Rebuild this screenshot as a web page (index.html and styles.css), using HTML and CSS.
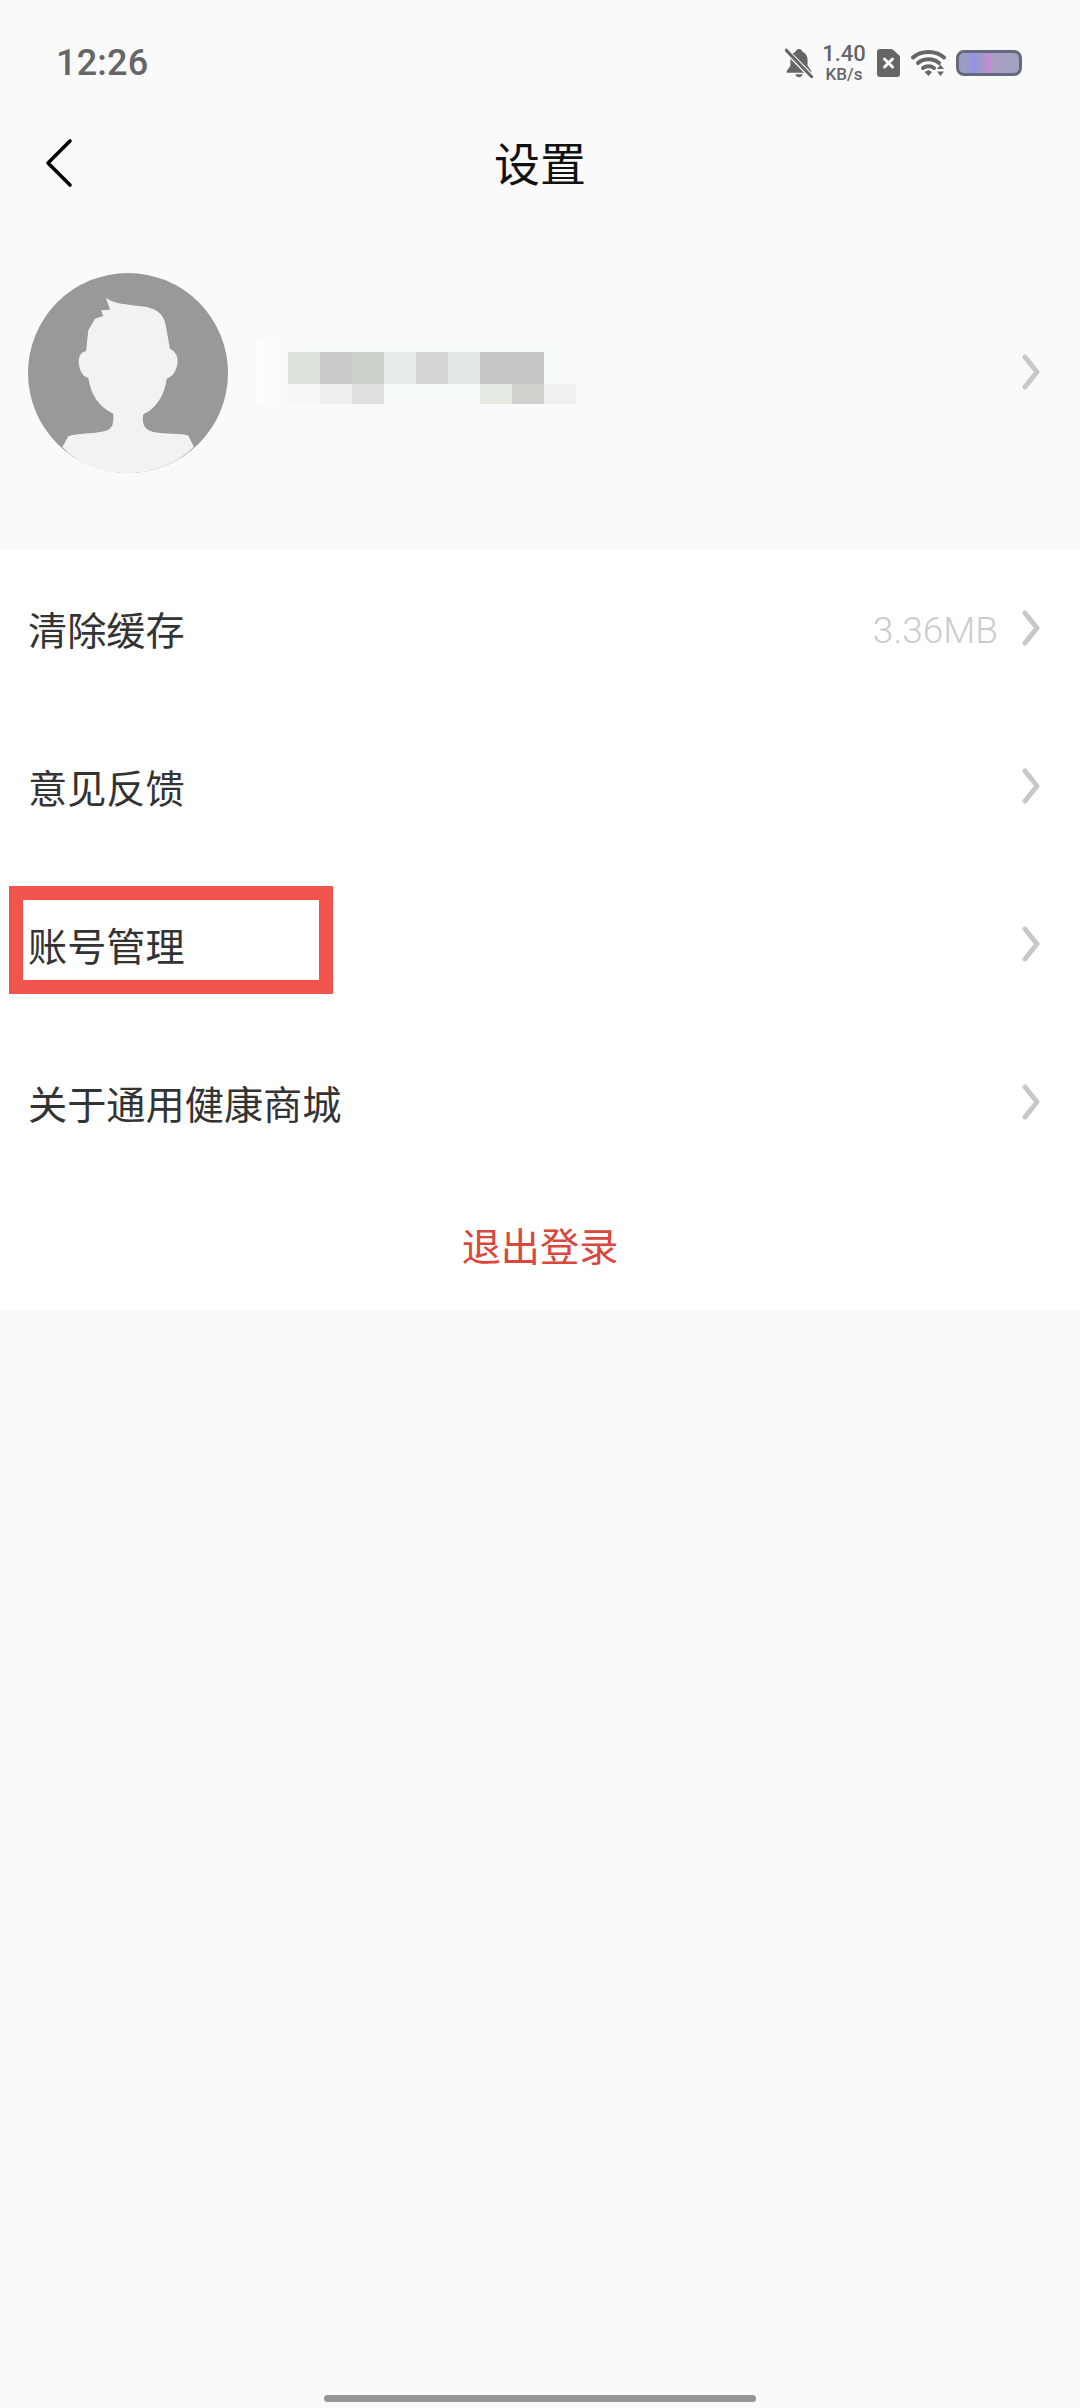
FILE: index.html
```html
<!DOCTYPE html>
<html lang="zh-CN">
<head>
<meta charset="utf-8">
<title>设置</title>
<link rel="stylesheet" href="styles.css">
</head>
<body>
<div class="page">
  <header class="status">
    <span class="time">12:26</span>
    <div class="status-icons">
      <svg class="i-bell" viewBox="0 0 26 28"><path d="M13 1C11.400 1 10.200 2 9.800 3.400 6.600 4.600 5 7.500 5 11v5.500L1.500 21.500V23h23v-1.500L21 16.500V11c0-3.500-1.600-6.400-4.800-7.600C15.800 2 14.600 1 13 1zM9.500 24.500h7c-.5 1.700-1.900 2.800-3.500 2.800s-3-1.100-3.500-2.800z" fill="#666"/><path d="M0 1.500l25 25.500" stroke="#fafafa" stroke-width="5"/><path d="M1 2l24 25" stroke="#666" stroke-width="2.800" stroke-linecap="round"/></svg>
      <div class="speed"><span class="speed-num">1.40</span><span class="speed-unit">KB/s</span></div>
      <svg class="i-sim" viewBox="0 0 23 28"><path d="M3 0h12l8 7v18a3 3 0 0 1-3 3H3a3 3 0 0 1-3-3V3a3 3 0 0 1 3-3z" fill="#666"/><path d="M7.500 10l8 8M15.500 10l-8 8" stroke="#fff" stroke-width="3" stroke-linecap="round"/></svg>
      <svg class="i-wifi" viewBox="0 0 35 27"><g fill="none" stroke="#666" stroke-width="4" stroke-linecap="round"><path d="M2 8.500C10 1 25 1 33 8.500"/><path d="M7 14c6-5 15-5 21 0"/><path d="M12 19c3-2.200 8-2.200 11 0"/></g><path d="M13.500 23l4-2 3.500 2-3.500 4z" fill="#666"/><path d="M29.500 15.500l3.500 4.500h-7zM29.500 27l3.500-4.500h-7z" fill="#666"/></svg>
      <div class="battery"></div>
    </div>
  </header>

  <nav class="nav">
    <svg class="back" viewBox="0 0 30 50"><path d="M26 3L4 25l22 22" fill="none" stroke="#000" stroke-width="3.600" stroke-linecap="round" stroke-linejoin="round"/></svg>
    <h1 class="title">设置</h1>
  </nav>

  <section class="profile">
    <svg class="avatar" viewBox="84 68 600 600">
      <circle cx="384" cy="368" r="300" fill="#999"/>
      <path fill="#f2f2f2" d="M318 143C350 165 400 163 440 170C475 178 492 195 497 225L510 295C525 303 534 315 533 335C530 362 518 380 500 385C495 430 470 475 430 492C426 515 428 538 460 545C500 552 545 548 565 556L582 590C530 640 460 668 384 668C300 668 235 640 187 590L205 558C240 547 290 552 322 540C342 530 340 510 340 490C295 470 272 430 265 383C245 378 236 355 236 330C238 312 248 303 258 303L265 240L285 205L310 197L303 180L330 178Z"/>
    </svg>
    <div class="name" aria-hidden="true">
      <div class="mask-glow"></div>
      <div class="mask-row tall">
        <i class="c1"></i><i class="c2"></i><i class="c3"></i><i class="c4"></i><i class="c5"></i><i class="c6"></i><i class="c7"></i><i class="c7"></i>
      </div>
      <div class="mask-row short">
        <i class="c8"></i><i class="c9"></i><i class="c10"></i><i class="c0"></i><i class="c0"></i><i class="c0"></i><i class="c11"></i><i class="c12"></i><i class="c13"></i>
      </div>
    </div>
    <svg class="chev chev-profile" viewBox="0 0 18 36"><path d="M3 3l12 15L3 33"/></svg>
  </section>

  <section class="list">
    <div class="row"><span class="label">清除缓存</span><div class="right"><span class="value">3.36MB</span><svg class="chev" viewBox="0 0 18 36"><path d="M3 3l12 15L3 33"/></svg></div></div>
    <div class="row"><span class="label">意见反馈</span><div class="right"><svg class="chev" viewBox="0 0 18 36"><path d="M3 3l12 15L3 33"/></svg></div></div>
    <div class="row"><span class="label">账号管理</span><div class="right"><svg class="chev" viewBox="0 0 18 36"><path d="M3 3l12 15L3 33"/></svg></div><div class="highlight"></div></div>
    <div class="row"><span class="label">关于通用健康商城</span><div class="right"><svg class="chev" viewBox="0 0 18 36"><path d="M3 3l12 15L3 33"/></svg></div></div>
    <div class="logout">退出登录</div>
  </section>

  <div class="home-bar"><span class="home-pill"></span></div>
</div>
</body>
</html>
```

FILE: styles.css
```css
* { box-sizing: border-box; }
html, body { margin: 0; padding: 0; }
body {
  background: #fafafa;
  font-family: "Noto Sans CJK SC", "Noto Sans", sans-serif;
}
.page {
  width: 1080px;
  height: 2408px;
  display: flex;
  flex-direction: column;
  background: #fafafa;
}
.status {
  height: 124px;
  flex: none;
  display: flex;
  justify-content: space-between;
  align-items: flex-start;
  padding: 42px 58px 0 56px;
}
.time {
  font-family: Roboto, sans-serif;
  font-size: 36px;
  font-weight: 500;
  letter-spacing: 0.2px;
  line-height: 42px;
  color: #666;
}
.status-icons {
  display: flex;
  align-items: center;
  margin-top: 0;
}
.i-bell { width: 28px; height: 30px; margin-right: 9px; }
.speed {
  width: 44px;
  display: flex;
  flex-direction: column;
  align-items: center;
  font-family: Roboto, sans-serif;
  font-weight: 500;
  color: #666;
  margin-right: 11px;
}
.speed-num { font-size: 22px; line-height: 23px; }
.speed-unit { font-size: 17px; line-height: 18px; }
.i-sim { width: 23px; height: 28px; margin-right: 11px; }
.i-wifi { width: 35px; height: 27px; margin-right: 10px; }
.battery {
  width: 66px;
  height: 26px;
  border: 3px solid #666a80;
  border-radius: 8px;
  background: linear-gradient(90deg, #9a9cc4 0%, #9a9cc4 12%, #9690e6 25%, #a09cc8 38%, #c48bd4 48%, #a9a0c4 60%, #a2a2bc 100%);
}

.nav {
  height: 76px;
  flex: none;
  position: relative;
  display: flex;
  align-items: center;
  justify-content: center;
}
.back {
  position: absolute;
  left: 44px;
  top: 14px;
  width: 30px;
  height: 50px;
}
.title {
  margin: 0 0 2px;
  font-size: 46px;
  font-weight: 400;
  line-height: 60px;
  color: #111;
}

.profile {
  height: 350px;
  flex: none;
  display: flex;
  align-items: center;
  padding: 0 40px 4px 28px;
}
.avatar { width: 200px; height: 200px; flex: none; }
.name {
  position: relative;
  flex: 1;
  margin-left: 60px;
  height: 52px;
  margin-top: 10px;
}
.mask-glow {
  position: absolute;
  left: -32px;
  right: 270px;
  top: -12px;
  height: 64px;
  background: linear-gradient(90deg, #fcfdfc, #f7fbf8 8%, #f7fbf8 60%, #fafafa);
}
.mask-row { position: relative; display: flex; }
.mask-row i { display: block; width: 32px; height: 100%; }
.mask-row.tall { height: 32px; }
.mask-row.short { height: 20px; }
.c0 { background: transparent; }
.c1 { background: #dde1dc; }
.c2 { background: #ccc9cb; }
.c3 { background: #ccd0cb; }
.c4 { background: #e6ecea; }
.c5 { background: #d5d5d5; }
.c6 { background: #e4e8e4; }
.c7 { background: #c6c6c6; }
.c8 { background: #f6f7f6; }
.c9 { background: #eeeeee; }
.c10 { background: #dfe1de; }
.c11 { background: #e6ece4; }
.c12 { background: #cfd1cc; }
.c13 { background: #f0f1ee; }

.chev { width: 18px; height: 36px; flex: none; }
.chev-profile { margin-top: -2px; }
.chev path {
  fill: none;
  stroke: #c8c8c8;
  stroke-width: 5;
  stroke-linecap: round;
  stroke-linejoin: round;
}

.list {
  flex: none;
  background: #fff;
  padding-top: 2px;
}
.row {
  position: relative;
  height: 158px;
  display: flex;
  align-items: center;
  justify-content: space-between;
  padding: 0 40px 0 28px;
}
.label {
  font-size: 39.200px;
  line-height: 56px;
  color: #333;
  margin-top: -6px;
}
.right { display: flex; align-items: center; margin-top: -7px; }
.value {
  font-family: Roboto, sans-serif;
  font-size: 37px;
  font-weight: 300;
  color: #ccc;
  margin-right: 24px;
  margin-top: 6px;
}
.highlight {
  position: absolute;
  left: 9px;
  top: 18px;
  width: 324px;
  height: 108px;
  border: 14px solid #f1534d;
}
.logout {
  height: 126px;
  display: flex;
  align-items: center;
  justify-content: center;
  font-size: 39.200px;
  color: #da473d;
  padding-bottom: 6px;
}

.home-bar {
  margin-top: auto;
  height: 13px;
  display: flex;
  justify-content: center;
  flex: none;
}
.home-pill {
  width: 432px;
  height: 7px;
  border-radius: 4px;
  background: #959595;
}
```
